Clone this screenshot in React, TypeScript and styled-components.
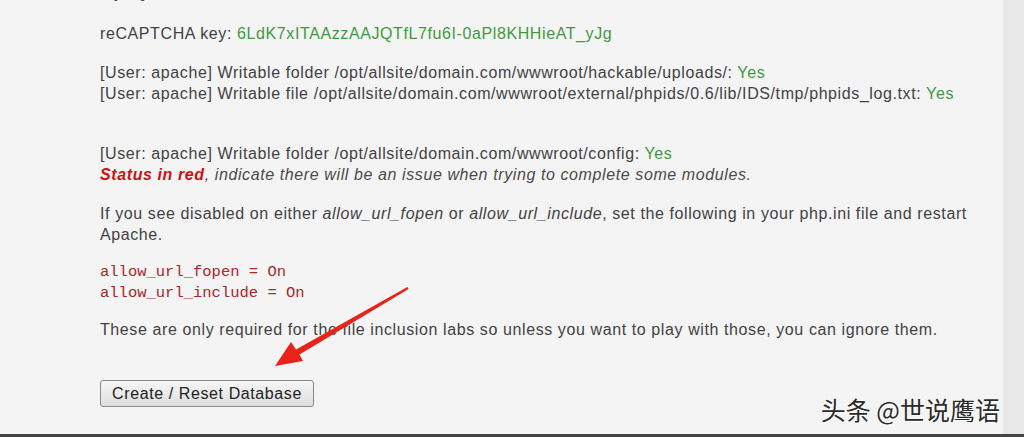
import React from "react";
import styled, { createGlobalStyle } from "styled-components";

const GlobalStyle = createGlobalStyle`
    html, body {
        margin: 0;
        padding: 0;
        background: #f4f4f4;
    }
    body {
        font-family: "Liberation Sans", Arial, sans-serif;
    }
`;

const App = () => {
    return (
        <Page>
            <GlobalStyle />
            <Main>
                <Content>
                    <Para>MySQL database: dvwa</Para>
                    <Para $top={20}>
                        reCAPTCHA key:{" "}
                        <Ok>6LdK7xITAAzzAAJQTfL7fu6I-0aPl8KHHieAT_yJg</Ok>
                    </Para>
                    <Para>
                        [User: apache] Writable folder
                        /opt/allsite/domain.com/wwwroot/hackable/uploads/:{" "}
                        <Ok>Yes</Ok>
                        <br />
                        [User: apache] Writable file
                        /opt/allsite/domain.com/wwwroot/external/phpids/0.6/lib/IDS/tmp/phpids_log.txt:{" "}
                        <Ok>Yes</Ok>
                        <br />
                        <br />
                    </Para>
                    <Para>
                        [User: apache] Writable folder
                        /opt/allsite/domain.com/wwwroot/config: <Ok>Yes</Ok>
                        <br />
                        <Note>
                            <Bad>Status in red</Bad>, indicate there will be an
                            issue when trying to complete some modules.
                        </Note>
                    </Para>
                    <Para>
                        If you see disabled on either <em>allow_url_fopen</em>{" "}
                        or <em>allow_url_include</em>, set the following in
                        your php.ini file and restart Apache.
                    </Para>
                    <Code>
                        {"allow_url_fopen = On\nallow_url_include = On"}
                    </Code>
                    <Para $top={15}>
                        These are only required for the file inclusion labs so
                        unless you want to play with those, you can ignore
                        them.
                    </Para>
                    <Form>
                        <Button type="button">Create / Reset Database</Button>
                    </Form>
                </Content>
                <Arrow width="1003" height="434" viewBox="0 0 1003 434">
                    <polygon
                        points="275,366 303,361 299.5,354.5 408.6,289 407.4,287 296,349.5 291,342"
                        fill="#e8231a"
                    />
                </Arrow>
                <Watermark>头条 @世说鹰语</Watermark>
            </Main>
            <Side />
        </Page>
    );
};

export default App;

const Page = styled.div`
    display: flex;
    width: 1024px;
    height: 434px;
    overflow: hidden;
    border-bottom: 3px solid #444;
`;

const Main = styled.div`
    position: relative;
    flex: 1;
    background: #f4f4f4;
    overflow: hidden;
`;

const Side = styled.div`
    width: 21px;
    background: #e8e8e8;
`;

const Content = styled.div`
    display: flex;
    flex-direction: column;
    margin-top: -18px;
    padding: 0 25px 0 100px;
    font-size: 16px;
    letter-spacing: 0.6px;
    line-height: 21px;
    color: #424242;
`;

const Para = styled.p<{ $top?: number }>`
    margin: ${(props) => props.$top ?? 18}px 0 0;
    &:first-child {
        margin-top: 0;
    }
`;

const Ok = styled.span`
    color: #3f9a3f;
`;

const Note = styled.em`
    color: #4a4a4a;
`;

const Bad = styled.strong`
    color: #d01010;
`;

const Code = styled.pre`
    margin: 17px 0 0;
    font-family: "Liberation Mono", "Courier New", monospace;
    font-size: 15.5px;
    letter-spacing: 0;
    line-height: 21px;
    color: #a8282a;
`;

const Form = styled.div`
    margin-top: 40px;
`;

const Button = styled.button`
    height: 27px;
    width: 214px;
    padding: 0;
    font-family: "Liberation Sans", Arial, sans-serif;
    font-size: 16px;
    letter-spacing: 0.6px;
    color: #222;
    background: linear-gradient(#f6f6f6, #dedede);
    border: 1px solid #8a8a8a;
    border-radius: 3px;
`;

const Arrow = styled.svg`
    position: absolute;
    left: 0;
    top: 0;
    pointer-events: none;
`;

const Watermark = styled.div`
    position: absolute;
    right: 3px;
    top: 393px;
    font-family: "Noto Sans CJK SC", sans-serif;
    font-size: 25px;
    line-height: 32px;
    color: #2b2b2b;
    text-shadow: 0 0 2px #fff, 1px 1px 0 #fff;
`;
